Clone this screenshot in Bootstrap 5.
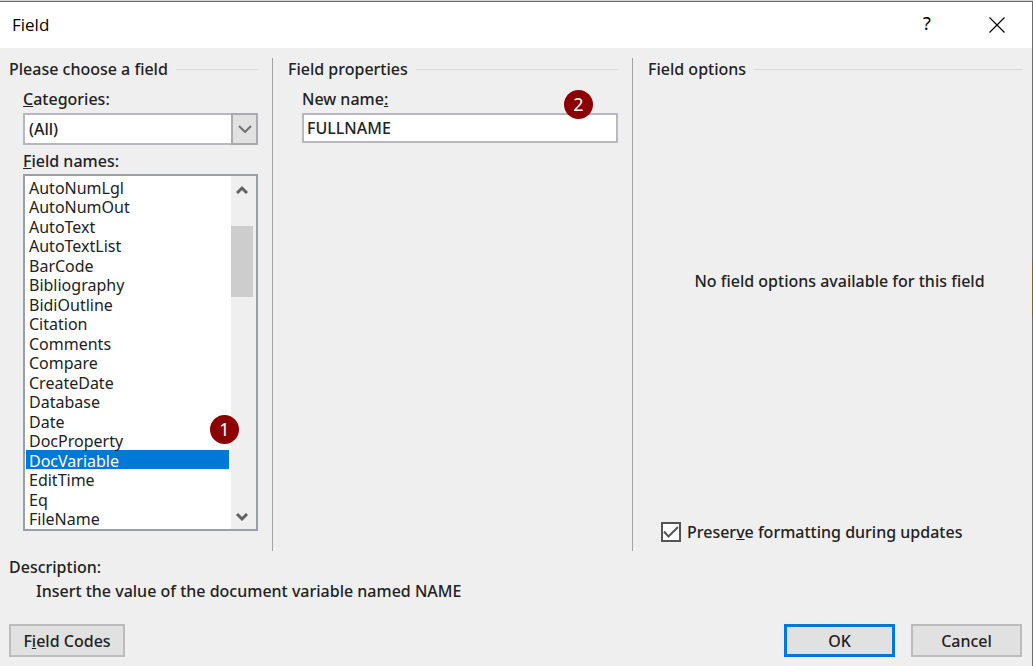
<!DOCTYPE html>
<html lang="en">
<head>
<meta charset="utf-8">
<meta name="viewport" content="width=device-width, initial-scale=1">
<title>Field</title>
<link rel="stylesheet" href="https://cdn.jsdelivr.net/npm/bootstrap@5.3.0/dist/css/bootstrap.min.css">
<style>
  body { font-family: "Noto Sans", "Open Sans", sans-serif; font-size: 16px; font-weight: 500; line-height: 22px; color: #222; background: #efefef; }
  .dialog-window { border-top: 1px solid #d4d4d4; }
  .window-edge { width: 1px; background: linear-gradient(#6b6b6b 260px, #7d6426 260px, #7d6426 315px, #6b6b6b 315px); }
  .title-bar { height: 47px; border-top: 1px solid #696969; padding-left: 12px; }
  .title-bar h1 { font-family: "Open Sans", sans-serif; font-size: 17px; line-height: 24px; color: #000; }
  .caption-btn { width: 70px; height: 46px; border: 0; background: none; color: #000; padding: 0; font-size: 18px; }
  .dialog-main { padding: 10px 9px 9px; }
  .panels { display: grid; grid-template-columns: 264fr 360fr 390fr; }
  .panel + .panel { padding-left: 15px; }
  .panel:not(:last-child) { border-right: 1px solid #a3a3a3; padding-right: 14px; }
  .group-title { font-size: 16px; font-weight: 500; line-height: 22px; gap: 8px; }
  .group-title::after { content: ""; flex: 1; height: 1px; background: #d9d9d9; }
  .group-body { padding-left: 14px; }
  .field-label { display: block; margin: 8px 0 3px; }
  .field-label.after-combo { margin-top: 5px; }
  .form-select.combo, .form-control.name-box { border: 2px solid #b6b8be; border-radius: 0; background: #fff; color: #222; font-size: 16px; font-weight: 500; line-height: 22px; box-shadow: none; }
  .form-select.combo { height: 32px; padding: 0 30px 0 4px; }
  .combo-arrow { width: 27px; background: #e1e1e1; border: 2px solid #a9abae; pointer-events: none; }
  .name-box { height: 30px; padding: 0 3px; }
  .names-frame { border: 2px solid #9a9ea5; background: #fff; margin-top: -1px; }
  .names-list { border: 0; outline: 0; padding: 1px 2px 0 1px; overflow: hidden; background: #fff; color: #222; height: 353px; font-weight: 500; scrollbar-width: none; }
  .names-list option { height: 19px; min-height: 19px; padding: 0 3px; line-height: 19px; }
  .names-list option:nth-child(even) { height: 20px; min-height: 20px; }
  .names-list option:checked { background: #0078d7 linear-gradient(#0078d7, #0078d7) !important; color: #fff !important; }
  .scroll-track { width: 25px; background: #efefef; padding: 7px 3px 6px 0; }
  .scroll-thumb { height: 71px; margin-top: 29px; background: #cdcdcd; align-self: stretch; }
  .step { width: 29px; height: 29px; border-radius: 50%; background: #8b0000; color: #fff; font-size: 18px; font-weight: 400; line-height: 29px; text-align: center; position: absolute; }
  .step-one { right: 17px; bottom: 85px; }
  .step-two { right: 25px; top: 2px; }
  .form-check-input.preserve { width: 20px; height: 20px; border: 2px solid #555; border-radius: 0; margin: 0; background-color: #fff; background-size: 16px 16px; }
  .preserve:checked { background-image: url("data:image/svg+xml,%3Csvg xmlns='http://www.w3.org/2000/svg' viewBox='0 0 16 16'%3E%3Cpath d='M1 7.500l4.500 5L15 3' fill='none' stroke='%23555' stroke-width='2'/%3E%3C/svg%3E"); }
  .options-area { padding-bottom: 40px; }
  .options-check { margin: 0 0 8px 13px; gap: 6px; }
  .description { line-height: 24px; padding-top: 4px; }
  .description p { padding-left: 27px; }
  .btn.dlg { border: 2px solid #bcbcbc; border-radius: 0; background: #e1e1e1; color: #222; font-size: 16px; font-weight: 500; line-height: 22px; height: 33px; padding: 0; width: 111px; }
  .btn.dlg-codes { width: 116px; }
  .btn.dlg-ok { border: 3px solid #0078d7; }
  .actions { margin-top: 21px; padding-right: 1px; }
</style>
</head>
<body>
<div class="dialog-window d-flex min-vh-100">
  <div class="flex-grow-1 d-flex flex-column">
    <header class="title-bar bg-white d-flex align-items-center">
      <h1 class="m-0 fw-normal me-auto">Field</h1>
      <button class="caption-btn fw-normal pb-1" type="button" aria-label="Help">?</button>
      <button class="caption-btn pb-1" type="button" aria-label="Close">
        <svg width="16" height="16" viewBox="0 0 16 16" fill="none" stroke="#000" stroke-width="1.200"><path d="M.5.5l15 15M15.500.5l-15 15"/></svg>
      </button>
    </header>
    <form class="dialog-main flex-grow-1 d-flex flex-column">
      <div class="panels flex-grow-1">
        <section class="panel">
          <h2 class="group-title d-flex align-items-center m-0">Please choose a field</h2>
          <div class="group-body">
            <label class="field-label" for="categories"><u>C</u>ategories:</label>
            <div class="position-relative">
              <select class="form-select combo" id="categories"><option>(All)</option></select>
              <span class="combo-arrow position-absolute top-0 end-0 bottom-0 d-flex align-items-center justify-content-center">
                <svg width="14" height="8" viewBox="0 0 14 8" fill="none" stroke="#707070" stroke-width="2"><path d="M1 1l6 6 6-6"/></svg>
              </span>
            </div>
            <label class="field-label after-combo" for="names"><u>F</u>ield names:</label>
            <div class="names-frame d-flex position-relative">
              <select class="names-list flex-grow-1" id="names" size="18">
                <option>AutoNumLgl</option><option>AutoNumOut</option><option>AutoText</option><option>AutoTextList</option><option>BarCode</option><option>Bibliography</option><option>BidiOutline</option><option>Citation</option><option>Comments</option><option>Compare</option><option>CreateDate</option><option>Database</option><option>Date</option><option>DocProperty</option><option selected>DocVariable</option><option>EditTime</option><option>Eq</option><option>FileName</option>
              </select>
              <div class="scroll-track d-flex flex-column align-items-center" aria-hidden="true">
                <svg width="12" height="14" viewBox="0 0 12 14" fill="none" stroke="#606060" stroke-width="3"><path d="M1 10l5-5 5 5"/></svg>
                <div class="scroll-thumb"></div>
                <svg class="mt-auto" width="12" height="12" viewBox="0 0 12 12" fill="none" stroke="#606060" stroke-width="3"><path d="M1 3l5 5 5-5"/></svg>
              </div>
              <span class="step step-one">1</span>
            </div>
          </div>
        </section>
        <section class="panel">
          <h2 class="group-title d-flex align-items-center m-0">Field properties</h2>
          <div class="group-body position-relative">
            <label class="field-label" for="newname">New name<u>:</u></label>
            <input class="form-control name-box" id="newname" type="text" value="FULLNAME">
            <span class="step step-two">2</span>
          </div>
        </section>
        <section class="panel d-flex flex-column">
          <h2 class="group-title d-flex align-items-center m-0">Field options</h2>
          <div class="options-area flex-grow-1 d-flex flex-column">
            <p class="text-center m-0 my-auto ps-2">No field options available for this field</p>
          </div>
          <div class="options-check d-flex align-items-center">
            <input class="form-check-input preserve" type="checkbox" id="preserve" checked>
            <label for="preserve">Preser<u>v</u>e formatting during updates</label>
          </div>
        </section>
      </div>
      <div class="description">
        <div>Description:</div>
        <p class="m-0">Insert the value of the document variable named NAME</p>
      </div>
      <div class="actions d-flex">
        <button class="btn dlg dlg-codes me-auto" type="button">F<u>i</u>eld Codes</button>
        <button class="btn dlg dlg-ok me-3" type="submit">OK</button>
        <button class="btn dlg" type="button">Cancel</button>
      </div>
    </form>
  </div>
  <div class="window-edge"></div>
</div>
<script src="https://cdn.jsdelivr.net/npm/bootstrap@5.3.0/dist/js/bootstrap.bundle.min.js"></script>
</body>
</html>
